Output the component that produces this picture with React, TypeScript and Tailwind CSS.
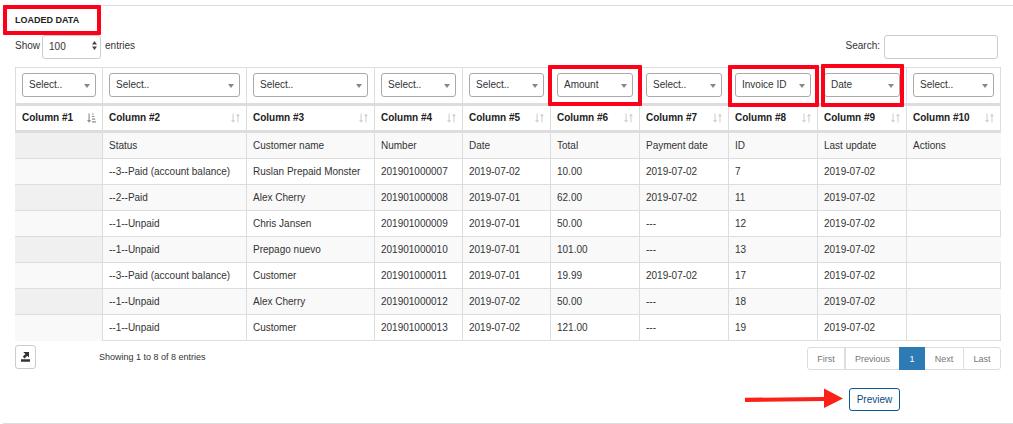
import React from "react";

type Column = { title: string; width: string; value: string; mark?: string };

const columns: Column[] = [
  { title: "Column #1", width: "w-[87px]", value: "Select.." },
  { title: "Column #2", width: "w-[144px]", value: "Select.." },
  { title: "Column #3", width: "w-[128px]", value: "Select.." },
  { title: "Column #4", width: "w-[88px]", value: "Select.." },
  { title: "Column #5", width: "w-[88px]", value: "Select.." },
  { title: "Column #6", width: "w-[89px]", value: "Amount", mark: "-inset-[3px]" },
  { title: "Column #7", width: "w-[89px]", value: "Select.." },
  { title: "Column #8", width: "w-[89px]", value: "Invoice ID", mark: "-top-[3px] -bottom-1 -left-px -right-[2px]" },
  { title: "Column #9", width: "w-[89px]", value: "Date", mark: "-inset-y-1 left-[3px] right-[2px]" },
  { title: "Column #10", width: "w-[95px]", value: "Select.." },
];

const fields = ["Select..", "Amount", "Invoice ID", "Date"];

const rows: string[][] = [
  ["", "Status", "Customer name", "Number", "Date", "Total", "Payment date", "ID", "Last update", "Actions"],
  ["", "--3--Paid (account balance)", "Ruslan Prepaid Monster", "201901000007", "2019-07-02", "10.00", "2019-07-02", "7", "2019-07-02", ""],
  ["", "--2--Paid", "Alex Cherry", "201901000008", "2019-07-01", "62.00", "2019-07-02", "11", "2019-07-02", ""],
  ["", "--1--Unpaid", "Chris Jansen", "201901000009", "2019-07-01", "50.00", "---", "12", "2019-07-02", ""],
  ["", "--1--Unpaid", "Prepago nuevo", "201901000010", "2019-07-01", "101.00", "---", "13", "2019-07-02", ""],
  ["", "--3--Paid (account balance)", "Customer", "201901000011", "2019-07-01", "19.99", "2019-07-02", "17", "2019-07-02", ""],
  ["", "--1--Unpaid", "Alex Cherry", "201901000012", "2019-07-02", "50.00", "---", "18", "2019-07-02", ""],
  ["", "--1--Unpaid", "Customer", "201901000013", "2019-07-02", "121.00", "---", "19", "2019-07-02", ""],
];

function Mark({ place }: { place: string }) {
  return <span className={`pointer-events-none absolute z-10 rounded-[1px] border-4 border-[#ff0019] ${place}`} />;
}

function SortIcon() {
  return (
    <svg viewBox="0 0 9 10" className="h-[10px] w-[9px] shrink-0" fill="#d2d2d2">
      <path d="M1.5 0.5H2.6V7H4.2L2.05 9.8L0 7H1.5ZM6.4 9.5H7.5V3.2H9L6.95 0.4L4.9 3.2H6.4Z" />
    </svg>
  );
}

function SortedIcon() {
  return (
    <svg viewBox="0 0 9 10" className="h-[10px] w-[9px] shrink-0" fill="#8e8e8e">
      <path d="M1.5 0.5H2.6V7H4.2L2.05 9.8L0 7H1.5ZM5 0.5H6.6V1.6H5ZM5 3H7.4V4.1H5ZM5 5.6H8.2V6.7H5ZM5 8.2H9V9.4H5Z" />
    </svg>
  );
}

function FieldSelect({ column }: { column: Column }) {
  return (
    <div className="relative">
      <select
        aria-label={`Field for ${column.title}`}
        defaultValue={column.value}
        className="block h-6 w-full appearance-none rounded-[3px] border border-[#aaa] bg-white pl-[6px] pr-4 text-[10px] font-normal text-[#333]"
      >
        {fields.map((f) => (
          <option key={f}>{f}</option>
        ))}
      </select>
      <svg viewBox="0 0 6 4" className="pointer-events-none absolute right-[6px] top-[11px] h-1 w-[6px]" fill="#888">
        <path d="M0 0H6L3 4Z" />
      </svg>
    </div>
  );
}

function PageButton({ label, look }: { label: string; look: string }) {
  return <button className={`h-[23px] border-[#ddd] text-[9px] ${look}`}>{label}</button>;
}

export default function App() {
  return (
    <div className="bg-white pt-[5px] font-['Liberation_Sans',Arial,sans-serif] text-[10px] leading-[14px] text-[#333]">
      <section className="ml-[3px] border-y border-[#ddd] pb-3 pl-3 pr-3">
        <div className="relative -ml-3 w-[98px] pl-3">
          <h2 className="h-[29px] text-[9px] font-bold leading-[29px] text-[#222]">LOADED DATA</h2>
          <Mark place="inset-x-0 -top-px bottom-0" />
        </div>

        <div className="flex items-start justify-between">
          <label className="flex items-center gap-[2px]">
            <span className="-mt-[3px]">Show</span>
            <span className="relative">
              <select
                defaultValue="100"
                className="block h-6 w-[59px] appearance-none rounded-[3px] border border-[#ccc] bg-white pl-[6px] text-[10px]"
              >
                <option>10</option>
                <option>50</option>
                <option>100</option>
              </select>
              <svg viewBox="0 0 5 9" className="pointer-events-none absolute right-1 top-[6px] h-[9px] w-[5px]" fill="#444">
                <path d="M0 3.6L2.5 0L5 3.6ZM0 5.4H5L2.5 9Z" />
              </svg>
            </span>
            <span className="-mt-[3px] pl-[2px]">entries</span>
          </label>
          <label className="flex items-center gap-1 pr-[3px]">
            <span className="-mt-[3px]">Search:</span>
            <input type="text" className="h-6 w-[114px] rounded-[3px] border border-[#ccc] px-[6px]" />
          </label>
        </div>

        <table className="mt-2 w-full table-fixed border-separate border-spacing-0 text-left">
          <thead>
            <tr>
              {columns.map((c) => (
                <td
                  key={c.title}
                  className={`relative h-[39px] border-b-[3px] border-l border-t border-[#ddd] px-[6px] pb-[2px] pt-0 last:border-r ${c.width}`}
                >
                  <FieldSelect column={c} />
                  {c.mark && <Mark place={c.mark} />}
                </td>
              ))}
            </tr>
            <tr>
              {columns.map((c, i) => (
                <th
                  key={c.title}
                  className="h-[27px] border-b-[3px] border-l border-[#ddd] px-[6px] py-0 font-bold text-[#222] last:border-r"
                >
                  <div className="flex items-center justify-between">
                    <span className="whitespace-nowrap">{c.title}</span>
                    {i === 0 ? <SortedIcon /> : <SortIcon />}
                  </div>
                </th>
              ))}
            </tr>
          </thead>
          <tbody>
            {rows.map((row, r) => (
              <tr key={r} className="group odd:bg-[#f9f9f9]">
                {row.map((cell, i) => (
                  <td
                    key={i}
                    className="h-[26px] whitespace-nowrap border-b border-l border-[#ddd] px-[6px] py-0 first:border-l-0 first:bg-[#f9f9f9] group-odd:first:bg-[#f0f0f0] group-even:last:border-r group-last:first:border-b-0"
                  >
                    {cell}
                  </td>
                ))}
              </tr>
            ))}
          </tbody>
        </table>

        <div className="mt-1 flex items-start justify-between">
          <div className="flex items-center">
            <button aria-label="Export" className="flex h-6 w-[21px] items-center justify-center rounded-[3px] border border-[#ccc]">
              <svg viewBox="0 0 9 10" className="h-[10px] w-[9px]" fill="#333">
                <path d="M0 7.2H9V9.8H0ZM2.6 0H8V5.4L6.3 3.8L3.6 6.4L1.8 4.7L4.4 2L2.6 0.4Z" />
              </svg>
            </button>
            <span className="ml-[63px] text-[9px]">Showing 1 to 8 of 8 entries</span>
          </div>
          <nav className="mt-[2px] flex text-[#777]">
            <PageButton label="First" look="w-[38px] rounded-l-[3px] border" />
            <PageButton label="Previous" look="w-[54px] border-y border-l" />
            <PageButton label="1" look="w-[26px] bg-[#2e7ab5] text-white" />
            <PageButton label="Next" look="w-[38px] border-y" />
            <PageButton label="Last" look="w-[38px] rounded-r-[3px] border" />
          </nav>
        </div>

        <div className="mt-[18px] flex items-start justify-end gap-[6px] pr-[101px]">
          <svg viewBox="0 0 98 20" className="h-5 w-[98px]" fill="#fb2118">
            <path d="M0 9.8L79 9V0.4L98 10.4L79 20V13L0 14Z" />
          </svg>
          <button className="h-[23px] w-[51px] rounded-[3px] border border-[#0b5a98] text-[#0b4a80]">Preview</button>
        </div>
      </section>
    </div>
  );
}
